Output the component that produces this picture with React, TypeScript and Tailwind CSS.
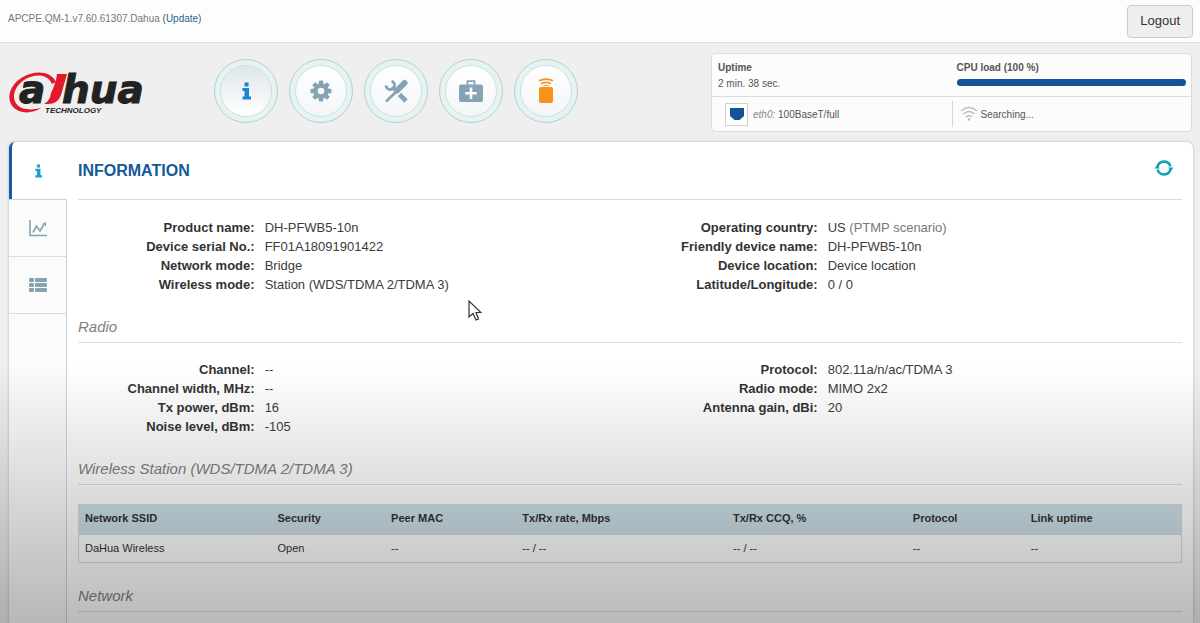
import React from "react";

type Field = { label: string; value: React.ReactNode };

const general: Field[] = [
  { label: "Product name:", value: "DH-PFWB5-10n" },
  { label: "Device serial No.:", value: "FF01A18091901422" },
  { label: "Network mode:", value: "Bridge" },
  { label: "Wireless mode:", value: "Station (WDS/TDMA 2/TDMA 3)" },
];

const location: Field[] = [
  {
    label: "Operating country:",
    value: (
      <>
        US <span className="text-[#777777]">(PTMP scenario)</span>
      </>
    ),
  },
  { label: "Friendly device name:", value: "DH-PFWB5-10n" },
  { label: "Device location:", value: "Device location" },
  { label: "Latitude/Longitude:", value: "0 / 0" },
];

const radioLeft: Field[] = [
  { label: "Channel:", value: "--" },
  { label: "Channel width, MHz:", value: "--" },
  { label: "Tx power, dBm:", value: "16" },
  { label: "Noise level, dBm:", value: "-105" },
];

const radioRight: Field[] = [
  { label: "Protocol:", value: "802.11a/n/ac/TDMA 3" },
  { label: "Radio mode:", value: "MIMO 2x2" },
  { label: "Antenna gain, dBi:", value: "20" },
];

const columns = [
  { name: "Network SSID", value: "DaHua Wireless", width: "w-[17.5%]" },
  { name: "Security", value: "Open", width: "w-[10.3%]" },
  { name: "Peer MAC", value: "--", width: "w-[11.9%]" },
  { name: "Tx/Rx rate, Mbps", value: "-- / --", width: "w-[19.1%]" },
  { name: "Tx/Rx CCQ, %", value: "-- / --", width: "w-[16.3%]" },
  { name: "Protocol", value: "--", width: "w-[10.7%]" },
  { name: "Link uptime", value: "--", width: "w-[14.2%]" },
];

function Logo() {
  return (
    <svg viewBox="0 -10 144 60" className="h-[60px] w-[144px] shrink-0" role="img" aria-label="Dahua Technology">
      <path
        d="M48 11 C43 0 27 -1 15 6 C1 14 -2 28 5 36 C11 43 24 43 33 37 C24 39.500 13 39 8.500 33 C3 26 7 15 16 9 C26 3 39 2 44 13 Z"
        fill="#e5172b"
      />
      <path d="M49 3 H59 L53 24 Q50 33 40 33 H36 Q42 30 43 22 Q48 12 49 3 Z" fill="#e5172b" />
      <text x="11" y="32" fontFamily="DejaVu Sans, sans-serif" fontSize="39" fontWeight="700" fontStyle="italic" fill="#222" stroke="#222" strokeWidth="1">
        a
      </text>
      <text x="54" y="32" fontFamily="DejaVu Sans, sans-serif" fontSize="39" fontWeight="700" fontStyle="italic" fill="#222" stroke="#222" strokeWidth="1">
        hua
      </text>
      <text x="37" y="42" fontFamily="Liberation Sans, sans-serif" fontSize="8" fontWeight="700" fontStyle="italic" fill="#222">
        TECHNOLOGY
      </text>
    </svg>
  );
}

function InfoIcon({ className }: { className: string }) {
  return (
    <svg viewBox="0 0 9 18" className={className} aria-hidden="true" fill="currentColor">
      <path d="M2.500 0.500 H6.500 V4.500 H2.500 Z M0.500 6 H7 V14.500 H9 V17.500 H0.500 V14.500 H2.500 V9 H0.500 Z" />
    </svg>
  );
}

const teeth = [0, 45, 90, 135];

function GearIcon() {
  return (
    <svg viewBox="0 0 22 22" className="size-[22px]" aria-hidden="true">
      {teeth.map((a) => (
        <rect key={a} x="8.800" y="0.500" width="4.400" height="21" rx="1" fill="#86a3b3" transform={`rotate(${a} 11 11)`} />
      ))}
      <circle cx="11" cy="11" r="7.800" fill="#86a3b3" />
      <circle cx="11" cy="11" r="3.200" fill="#fff" />
    </svg>
  );
}

function ToolsIcon() {
  return (
    <svg viewBox="0 0 24 24" className="size-6" aria-hidden="true" fill="none" stroke="#86a3b3">
      <path d="M7.500 2.200 A4.300 4.300 0 1 1 2 6.500" strokeWidth="2.800" />
      <path d="M8 8 L12 12" strokeWidth="3" />
      <path d="M15.500 15.500 L22 22" strokeWidth="4.600" />
      <path d="M13 12 L2 22.500" strokeWidth="2.600" />
      <path d="M20.500 4 L13 11.500" strokeWidth="6" strokeLinecap="round" />
    </svg>
  );
}

function MedkitIcon() {
  return (
    <svg viewBox="0 0 24 22" className="h-[22px] w-6" aria-hidden="true">
      <path d="M8.500 5 V1.200 H15.500 V5" fill="none" stroke="#86a3b3" strokeWidth="1.800" />
      <rect x="0" y="4.500" width="24" height="17.500" rx="2" fill="#86a3b3" />
      <path d="M12 7.500 V19 M6.300 13.200 H17.700" stroke="#fff" strokeWidth="2.600" />
    </svg>
  );
}

function BeaconIcon() {
  return (
    <svg viewBox="0 0 16 26" className="h-[26px] w-4" aria-hidden="true">
      <rect x="1" y="9" width="14" height="16" rx="2" fill="#f7931a" />
      <path d="M1 2.800 Q8 -0.500 15 2.800 M3 5.800 Q8 3 13 5.800" fill="none" stroke="#f7931a" strokeWidth="1.700" />
      <path d="M5.500 7.800 Q8 6.500 10.500 7.800" fill="none" stroke="#f7931a" strokeWidth="1" />
    </svg>
  );
}

function ChartIcon() {
  return (
    <svg viewBox="0 0 18 18" className="size-[18px]" aria-hidden="true" fill="none" stroke="#86a3b3">
      <path d="M1 1 V16.500 H18" strokeWidth="1.600" />
      <path d="M4 13.500 L7.500 7 L11 12 L15.500 4.500" strokeWidth="1.600" />
      <path d="M13.500 5 L16.500 3.500 L16.500 7" strokeWidth="1" />
    </svg>
  );
}

function ListIcon() {
  return (
    <svg viewBox="0 0 18 14" className="h-[14px] w-[18px]" aria-hidden="true" fill="#86a3b3">
      {[0, 5, 10].map((y) => (
        <g key={y}>
          <rect x="0" y={y} width="5" height="4" rx="1" />
          <rect x="6" y={y} width="12" height="4" rx="1" />
        </g>
      ))}
    </svg>
  );
}

function WifiIcon() {
  return (
    <svg viewBox="0 0 18 16" className="h-4 w-[18px]" aria-hidden="true" fill="none" stroke="#bbb" strokeWidth="1.500">
      <path d="M1 5 Q9 -2 17 5 M3.500 8 Q9 3 14.500 8 M6 11 Q9 8.500 12 11" />
      <circle cx="9" cy="13.500" r="1.200" fill="#bbb" stroke="none" />
    </svg>
  );
}

function RefreshIcon() {
  return (
    <svg viewBox="0 0 20 20" className="size-5" aria-hidden="true">
      <path d="M3.500 9 A6.700 6.700 0 0 1 16.500 8.500 M16.500 11 A6.700 6.700 0 0 1 3.500 11.500" fill="none" stroke="#17a2b5" strokeWidth="2.600" />
      <path d="M0.500 10.500 L3 7 L6 10.500 Z M14 9.500 L17 13 L19.500 9.500 Z" fill="#17a2b5" />
    </svg>
  );
}

const menu = [
  { name: "Information", icon: <InfoIcon className="h-[18px] w-[9px] text-[#1b86d0]" />, face: "bg-linear-to-b from-[#e0e6e9] to-white" },
  { name: "Settings", icon: <GearIcon />, face: "bg-linear-to-b from-white to-[#f3f5f9]" },
  { name: "Tools", icon: <ToolsIcon />, face: "bg-linear-to-b from-white to-[#f3f5f9]" },
  { name: "Support", icon: <MedkitIcon />, face: "bg-linear-to-b from-white to-[#f3f5f9]" },
  { name: "Beacon", icon: <BeaconIcon />, face: "bg-linear-to-b from-white to-[#f3f5f9]" },
];

function Fields({ items, tracks }: { items: Field[]; tracks: string }) {
  return (
    <dl className={"grid content-start gap-x-[10px] text-[13px] leading-[19px] " + tracks}>
      {items.map((f) => (
        <React.Fragment key={f.label}>
          <dt className="text-right font-bold whitespace-nowrap text-[#333333]">{f.label}</dt>
          <dd className="text-[#3c3c3c]">{f.value}</dd>
        </React.Fragment>
      ))}
    </dl>
  );
}

function SectionTitle({ children }: { children: React.ReactNode }) {
  return <h2 className="border-b border-[#dddddd] pb-[5px] text-[15px] leading-5 text-[#808080] italic">{children}</h2>;
}

export default function App() {
  return (
    <div className="relative flex min-h-screen flex-col bg-[#efefef] font-['Liberation_Sans',Arial,sans-serif]">
      <header className="flex h-[43px] items-center justify-between border-b border-[#dcdcdc] bg-[#fdfdfd] pr-[7px] pl-2">
        <p className="pb-[6px] text-[10px] text-[#777777]">
          APCPE.QM-1.v7.60.61307.Dahua{" "}
          <a href="#update" className="text-[#1f6690]">(Update)</a>
        </p>
        <button type="button" className="h-[33px] rounded border border-[#cccccc] bg-[#eeeeee] px-3 text-[13px] text-[#333333]">
          Logout
        </button>
      </header>

      <div className="flex h-[89px] items-start px-2 pt-[10px]">
        <div className="mt-[8px] w-[206px] shrink-0">
          <Logo />
        </div>
        <nav className="mt-[6px] flex gap-[11px]">
          {menu.map((m) => (
            <button
              key={m.name}
              type="button"
              aria-label={m.name}
              className="flex size-16 items-center justify-center rounded-full border border-[#b9cfcf] bg-[#e5f3f2]"
            >
              <span className={"flex size-[52px] items-center justify-center rounded-full border border-[#cfdfe0] " + m.face}>
                {m.icon}
              </span>
            </button>
          ))}
        </nav>
        <section className="ml-auto w-[41%] max-w-[481px] rounded-sm border border-[#dcdcdc] bg-[#fcfcfc] text-[10px] text-[#555555]">
          <div className="grid h-[43px] grid-cols-2 border-b border-[#dcdcdc]">
            <div className="px-[6px] pt-[6px] leading-4">
              <p className="font-bold">Uptime</p>
              <p>2 min. 38 sec.</p>
            </div>
            <div className="px-[5px] pt-[6px] leading-4">
              <p className="font-bold">CPU load (100 %)</p>
              <div className="mt-[3px] h-[7px] rounded-full bg-[#135397]" />
            </div>
          </div>
          <div className="grid h-[34px] grid-cols-2 items-center">
            <div className="flex items-center gap-[5px] pl-[13px]">
              <span className="flex size-[23px] items-center justify-center border border-[#d0d0d0] bg-white">
                <svg viewBox="0 0 14 12" className="h-3 w-[14px]" aria-hidden="true">
                  <path d="M0 0 H14 V8 L9.500 12 H4.500 L0 8 Z" fill="#135397" />
                </svg>
              </span>
              <p>
                <i className="text-[#888888]">eth0:</i> 100BaseT/full
              </p>
            </div>
            <div className="flex h-[26px] items-center gap-[3px] border-l border-[#d6d6d6] pl-[7px]">
              <WifiIcon />
              <p>Searching...</p>
            </div>
          </div>
        </section>
      </div>

      <main className="mt-[10px] mr-[7px] ml-[9px] flex flex-1 rounded-t-md bg-white shadow-[0_0_3px_rgba(0,0,0,0.25)]">
        <nav className="flex w-[58px] shrink-0 flex-col">
          <button
            type="button"
            aria-label="Information"
            className="flex h-[57px] items-center justify-center rounded-tl-md border-l-3 border-[#135ea2] pr-[2px]"
          >
            <InfoIcon className="h-[14px] w-[7px] text-[#1b9fcf]" />
          </button>
          <div className="flex flex-1 flex-col border-t border-r border-[#cad6da] bg-[#fbfbfb]">
            <button type="button" aria-label="Statistics" className="flex h-[57px] items-center justify-center border-b border-[#d6dfe2]">
              <ChartIcon />
            </button>
            <button type="button" aria-label="Log" className="flex h-[57px] items-center justify-center border-b border-[#d6dfe2]">
              <ListIcon />
            </button>
          </div>
        </nav>

        <div className="min-w-0 flex-1 px-[11px]">
          <div className="flex h-[58px] items-center justify-between border-b border-[#dddddd]">
            <h1 className="text-base font-bold text-[#14599b]">INFORMATION</h1>
            <button type="button" aria-label="Refresh" className="mr-2 mb-[6px]">
              <RefreshIcon />
            </button>
          </div>

          <div className="grid h-[117px] grid-cols-2 pt-[18px]">
            <Fields items={general} tracks="grid-cols-[32%_1fr]" />
            <Fields items={location} tracks="grid-cols-[34%_1fr]" />
          </div>

          <SectionTitle>Radio</SectionTitle>
          <div className="grid h-[116px] grid-cols-2 pt-[17px]">
            <Fields items={radioLeft} tracks="grid-cols-[32%_1fr]" />
            <Fields items={radioRight} tracks="grid-cols-[34%_1fr]" />
          </div>

          <SectionTitle>Wireless Station (WDS/TDMA 2/TDMA 3)</SectionTitle>
          <table className="mt-[19px] mb-[23px] w-full table-fixed border-collapse border border-[#d6dcde] text-left text-[11px] text-[#333333]">
            <thead>
              <tr className="h-[30px] bg-[#cde0e8]">
                {columns.map((c) => (
                  <th key={c.name} scope="col" className={"px-[6px] pb-[4px] font-bold " + c.width}>
                    {c.name}
                  </th>
                ))}
              </tr>
            </thead>
            <tbody>
              <tr className="h-7">
                {columns.map((c) => (
                  <td key={c.name} className="px-[6px]">
                    {c.value}
                  </td>
                ))}
              </tr>
            </tbody>
          </table>

          <SectionTitle>Network</SectionTitle>
        </div>
      </main>

      <div className="pointer-events-none absolute inset-x-0 bottom-0 h-[260px] bg-linear-to-b from-transparent to-black/27" />

      <svg viewBox="0 0 14 21" className="pointer-events-none absolute top-[300px] left-[468px] h-[21px] w-[14px]" aria-hidden="true">
        <path d="M1 1 V17 L5 13.500 L8 20 L10.500 19 L8 12.500 H13 Z" fill="#fff" stroke="#333" strokeWidth="1.200" />
      </svg>
    </div>
  );
}
